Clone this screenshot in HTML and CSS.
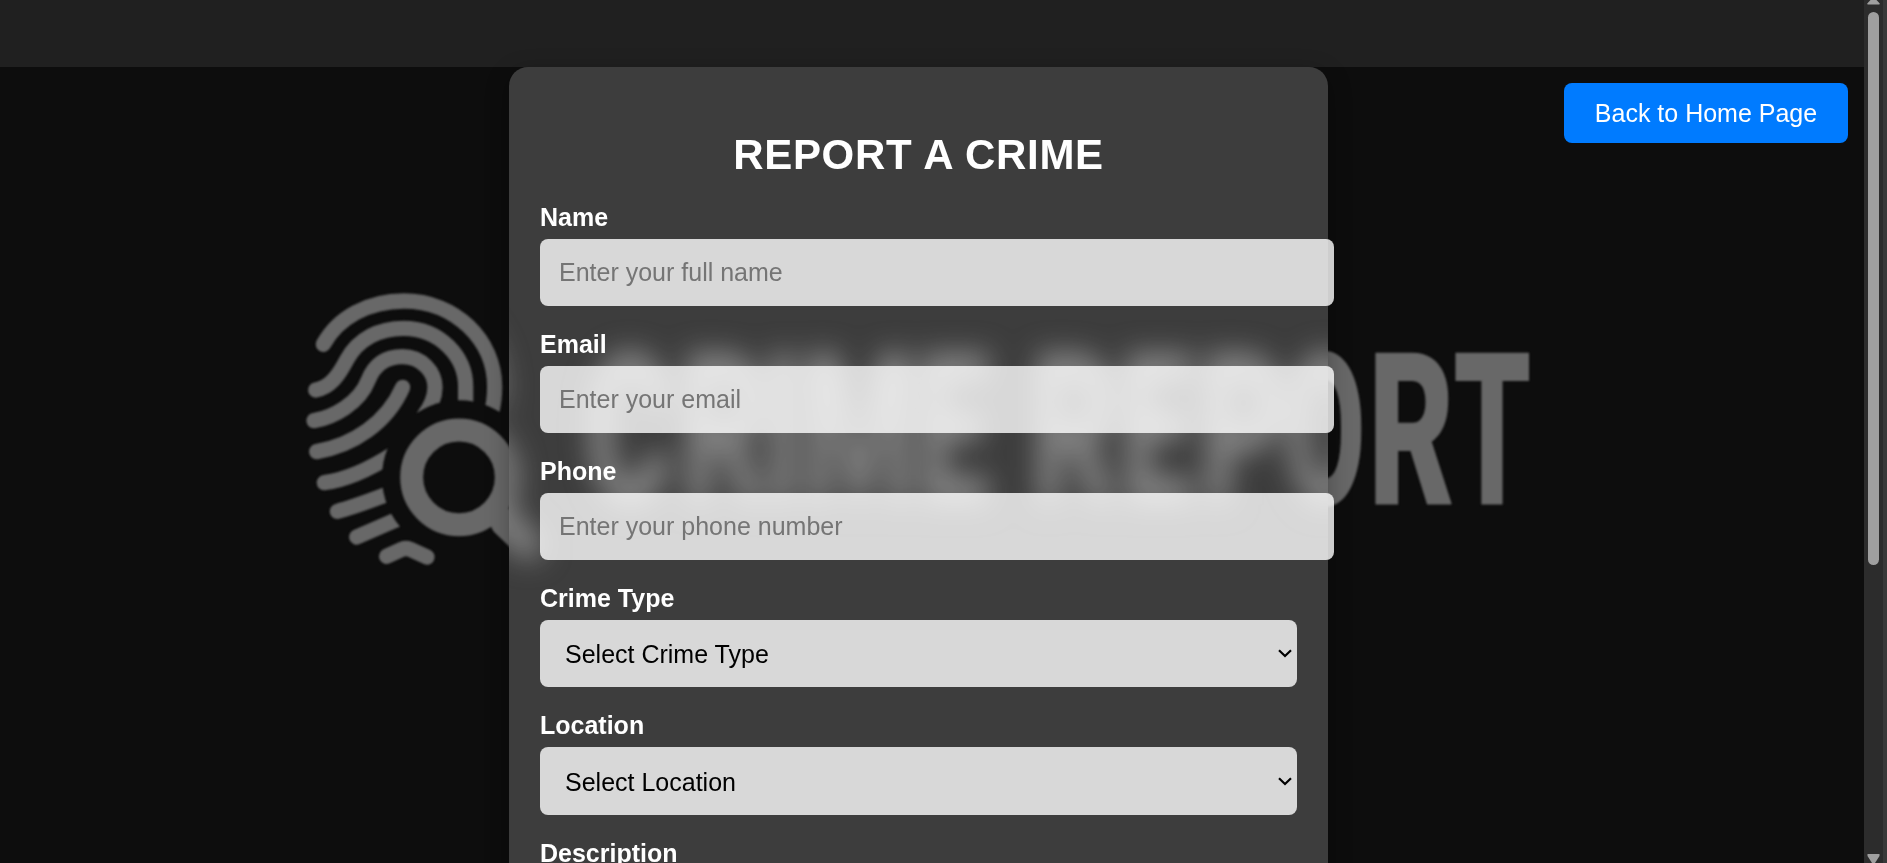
FILE: index.html
```
<!DOCTYPE html>
<html lang="en">
<head>
<meta charset="utf-8">
<title>Report a Crime</title>
<link rel="stylesheet" href="styles.css">
</head>
<body>
<div class="window">
  <div class="page">
    <svg class="watermark" viewBox="0 0 1864 863" aria-hidden="true">
      <defs>
        <mask id="lens-gap" maskUnits="userSpaceOnUse" x="0" y="0" width="900" height="900">
          <rect width="900" height="900" fill="#fff"/>
          <circle cx="507" cy="592" r="231" fill="#000"/>
        </mask>
        <clipPath id="card-area"><rect x="509" y="67" width="819" height="796"/></clipPath>
        <filter id="soft" filterUnits="userSpaceOnUse" x="0" y="0" width="1864" height="863"><feGaussianBlur stdDeviation=".8"/></filter>
        <filter id="frost" filterUnits="userSpaceOnUse" x="0" y="0" width="1864" height="863" color-interpolation-filters="sRGB"><feGaussianBlur stdDeviation="14"/></filter>
      </defs>
      <g filter="url(#soft)">
        <g id="logo">
          <g transform="translate(290 280) scale(.33333)" fill="none" stroke="#676767" stroke-width="46" stroke-linecap="round" stroke-linejoin="round">
            <g mask="url(#lens-gap)">
              <path d="M100 193C145 112 235 63 342 63C495 63 614 180 614 320C614 350 612 370 604 400"/>
              <path d="M77 330C120 322 145 288 170 240C205 175 270 145 340 145C450 145 527 230 527 320V385"/>
              <path d="M72 422C130 412 208 370 235 300C255 250 290 230 337 230C395 230 435 275 435 322C435 350 427 375 400 410"/>
              <path d="M80 515C190 495 290 430 338 322"/>
              <path d="M103 608C165 600 235 570 310 522"/>
              <path d="M142 694C190 682 240 662 310 636"/>
              <path d="M200 771L340 710"/>
              <path d="M290 829L336 808Q348 803 360 808L411 831"/>
            </g>
            <circle cx="507" cy="592" r="142" stroke-width="69"/>
            <path d="M645 728L715 795" stroke-width="86"/>
          </g>
          <text class="watermark-text" transform="translate(0 505) scale(.62 1)" y="0" x="944 1098 1230 1292 1478 1640 1663 1806 1936">CRIME REP<tspan x="2072" textLength="130" lengthAdjust="spacingAndGlyphs">O</tspan><tspan x="2207">R</tspan><tspan x="2344" textLength="126" lengthAdjust="spacingAndGlyphs">T</tspan></text>
        </g>
      </g>
      <g clip-path="url(#card-area)">
        <rect x="509" y="67" width="819" height="796" fill="#0d0d0d"/>
        <use href="#logo" filter="url(#frost)"/>
      </g>
    </svg>
    <header class="topbar"></header>
    <main class="content">
      <form class="card">
        <h1 class="title">REPORT A CRIME</h1>
        <div class="field">
          <label class="label" for="name">Name</label>
          <input class="control input" id="name" placeholder="Enter your full name">
        </div>
        <div class="field">
          <label class="label" for="email">Email</label>
          <input class="control input" id="email" placeholder="Enter your email">
        </div>
        <div class="field">
          <label class="label" for="phone">Phone</label>
          <input class="control input" id="phone" placeholder="Enter your phone number">
        </div>
        <div class="field">
          <label class="label" for="type">Crime Type</label>
          <div class="select-wrap">
            <select class="control select" id="type"><option>Select Crime Type</option></select>
            <svg class="chevron" viewBox="0 0 14 9"><path d="M1 1.2L7 7L13 1.2"/></svg>
          </div>
        </div>
        <div class="field">
          <label class="label" for="location">Location</label>
          <div class="select-wrap">
            <select class="control select tall" id="location"><option>Select Location</option></select>
            <svg class="chevron" viewBox="0 0 14 9"><path d="M1 1.2L7 7L13 1.2"/></svg>
          </div>
        </div>
        <div class="field">
          <label class="label">Description</label>
        </div>
      </form>
      <a class="home-button">Back to Home Page</a>
    </main>
  </div>
  <div class="scrollbar">
    <svg class="arrow-up" viewBox="0 0 13 5"><path d="M3.5 0H9.500L12.500 3.200V4.500H.5V3.200Z"/></svg>
    <div class="thumb"></div>
    <svg class="arrow-down" viewBox="0 0 13 9"><path d="M.5 0H12.500V2L8 9H5L.5 2Z"/></svg>
  </div>
</div>
</body>
</html>
```
FILE: styles.css
```
* {
  box-sizing: border-box;
}

body {
  margin: 0;
  background: #0d0d0d;
  font-family: "Liberation Sans", Arial, sans-serif;
  overflow: hidden;
}

.window {
  display: flex;
  height: 863px;
  overflow: hidden;
}

.page {
  position: relative;
  flex: 1;
  overflow: hidden;
  background: #0d0d0d;
}

.watermark {
  position: absolute;
  inset: 0;
  width: 1864px;
  height: 863px;
}

.watermark-text {
  font-family: Roboto, "Liberation Sans", sans-serif;
  font-weight: 900;
  font-size: 214px;
  fill: #676767;
}

.topbar {
  position: relative;
  height: 67px;
  background: #202020;
}

.content {
  position: relative;
  display: grid;
  grid-template-columns: 509px 819px 1fr;
  align-items: start;
}

.card {
  grid-column: 2;
  height: 1100px;
  padding: 64px 31px 31px;
  border-radius: 19px 19px 0 0;
  background: rgba(255, 255, 255, 0.2);
  box-shadow: 0 6px 23px rgba(0, 0, 0, 0.3);
}

.title {
  margin: 0 0 24px;
  font-size: 42px;
  line-height: 48px;
  letter-spacing: 0.7px;
  text-align: center;
  color: #fff;
}

.field {
  margin-bottom: 24px;
}

.label {
  display: block;
  margin-bottom: 8px;
  font-size: 25px;
  font-weight: bold;
  line-height: 28px;
  color: #fff;
}

.control {
  display: block;
  height: 67px;
  margin: 0;
  border: 0;
  border-radius: 8px;
  background: rgba(255, 255, 255, 0.8);
  font-family: inherit;
  font-size: 25px;
}

.input {
  width: 794px;
  padding: 0 19px;
}

.input::placeholder {
  color: #757575;
}

.select-wrap {
  display: grid;
  align-items: center;
}

.select {
  grid-area: 1 / 1;
  width: 757px;
  padding: 0 25px;
  appearance: none;
  color: #000;
}

.tall {
  height: 68px;
  padding-top: 1px;
}

.chevron {
  grid-area: 1 / 1;
  justify-self: end;
  width: 14px;
  height: 9px;
  margin-right: 5px;
  fill: none;
  stroke: #000;
  stroke-width: 2.2;
  z-index: 1;
}

.home-button {
  grid-column: 3;
  justify-self: end;
  width: 284px;
  margin: 16px 16px 0 0;
  border-radius: 8px;
  background: #007bff;
  color: #fff;
  font-size: 25px;
  line-height: 60px;
  text-align: center;
}

.scrollbar {
  display: flex;
  flex-direction: column;
  align-items: center;
  width: 23px;
  padding-right: 4px;
  background: linear-gradient(90deg, #2c2c2c 19px, #393939 19px);
}

.arrow-up {
  width: 13px;
  height: 5px;
  fill: #9f9f9f;
}

.thumb {
  width: 11px;
  height: 553px;
  margin-top: 7px;
  border-radius: 6px;
  background: #9f9f9f;
}

.arrow-down {
  width: 13px;
  height: 9px;
  margin-top: auto;
  fill: #9f9f9f;
}
```
